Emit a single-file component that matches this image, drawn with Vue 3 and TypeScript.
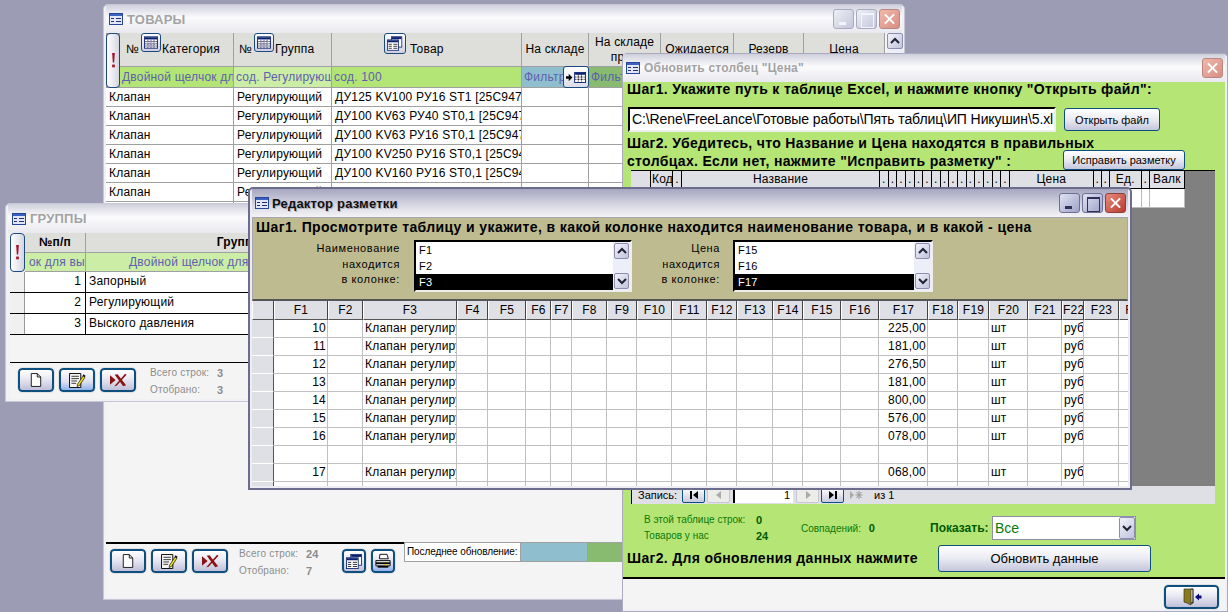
<template>
  <div class="desktop">
    <!-- shared icons -->
    <svg class="sprite" aria-hidden="true">
      <symbol id="i-form" viewBox="0 0 14 12">
        <rect x="0.5" y="0.5" width="13" height="11" fill="#dfe6f5" stroke="#27469a" />
        <rect x="1" y="1" width="12" height="2" fill="#3a62c0" />
        <path d="M2 5.5h3M7 5.5h5M2 8.5h3M7 8.5h5" stroke="#27306a" />
      </symbol>
      <symbol id="i-grid" viewBox="0 0 16 14">
        <rect x="0.5" y="0.5" width="15" height="13" fill="#fff" stroke="#0a2070" />
        <rect x="1" y="1" width="14" height="2.5" fill="#0a2070" />
        <path d="M1 6h14M1 8.5h14M1 11h14M4.5 4v9M8 4v9M11.5 4v9" stroke="#1a1a50" stroke-dasharray="1 0.6" />
      </symbol>
      <symbol id="i-forms" viewBox="0 0 20 18">
        <rect x="5.5" y="0.5" width="13" height="13" fill="#fff" stroke="#0a2070" />
        <rect x="6" y="1" width="12" height="2.5" fill="#0a2070" />
        <rect x="0.5" y="4.5" width="14" height="13" fill="#fff" stroke="#0a2070" />
        <rect x="1" y="5" width="13" height="2.5" fill="#0a2070" />
        <path d="M2 10h4M8 10h5M2 12.5h4M8 12.5h5M2 15h4M8 15h5" stroke="#111" />
      </symbol>
      <symbol id="i-new" viewBox="0 0 14 16">
        <path d="M1.5.5h7l4 4v11h-11z" fill="#fff" stroke="#000" />
        <path d="M8.5.5v4h4" fill="none" stroke="#000" />
      </symbol>
      <symbol id="i-edit" viewBox="0 0 18 16">
        <path d="M.5.5h12v15H.5z" fill="#f4f4f4" stroke="#000" />
        <path d="M2.5 3.5h8M2.5 6h8M2.5 8.5h6M2.5 11h5" stroke="#333" />
        <path d="M9 12l6-9 2 1.4-6 9-2.4 1z" fill="#f2e020" stroke="#000" stroke-width="0.7" />
        <path d="M14.4 3l1-1.6 2.2 1.4-1 1.7z" fill="#111" />
      </symbol>
      <symbol id="i-del" viewBox="0 0 18 14">
        <path d="M0 2l6 5-6 5z" fill="#8a1414" />
        <path d="M5 1.5l3-.5 9 11.5-3 1zM16 .5l1.5 1L7 13l-2.5.5z" fill="#8a1414" />
      </symbol>
      <symbol id="i-print" viewBox="0 0 18 18">
        <path d="M5.5 1.5h8l1.5 5h-10z" fill="#fff" stroke="#000" />
        <path d="M1 8.5h16v6H1z" fill="#dcdcdc" stroke="#000" />
        <path d="M1 11.5h16" stroke="#000" stroke-width="2" />
        <path d="M3 15.5h12" stroke="#000" stroke-width="2" />
        <rect x="10" y="12.5" width="4" height="1.2" fill="#e0c020" />
      </symbol>
      <symbol id="i-exit" viewBox="0 0 20 18">
        <path d="M2 1h7v16l-4-2-3-1z" fill="#8a7a18" stroke="#333" stroke-width="0.7" />
        <path d="M9 1h2v14H9" fill="none" stroke="#000" />
        <path d="M13 9l4-3.500v2h2.500v3H17v2z" fill="#0a0a80" />
      </symbol>
      <symbol id="i-goto" viewBox="0 0 22 12">
        <path d="M0 4.500h3V2l4 4-4 4V7.500H0z" fill="#000" />
        <rect x="9.500" y="0.500" width="12" height="11" fill="#fff" stroke="#0a2070" />
        <rect x="10" y="1" width="11" height="2" fill="#0a2070" />
        <path d="M10 5.500h11M10 8h11M13.500 3v8M17 3v8" stroke="#111" stroke-dasharray="1 .6" />
      </symbol>
      <symbol id="i-up" viewBox="0 0 10 8">
        <path d="M1 6l4-4 4 4" fill="none" stroke="#223" stroke-width="2" />
      </symbol>
      <symbol id="i-down" viewBox="0 0 10 8">
        <path d="M1 2l4 4 4-4" fill="none" stroke="#223" stroke-width="2" />
      </symbol>
      <symbol id="i-bang" viewBox="0 0 6 22">
        <path d="M1 0h4L4 14H2z" fill="#a0142c" />
        <rect x="1" y="17" width="4" height="4" fill="#a0142c" />
      </symbol>
    </svg>

    <!-- ТОВАРЫ -->
    <section class="win win-goods">
      <header class="title title-off">
        <svg class="form-icon"><use href="#i-form" /></svg>
        <span>ТОВАРЫ</span>
        <div class="controls">
          <i class="ctl ctl-min off"></i><i class="ctl ctl-max off"></i><i class="ctl ctl-close off"></i>
        </div>
      </header>
      <div class="goods-body">
        <div class="goods-top">
          <div class="goods-table">
            <div class="goods-head" :style="{ gridTemplateColumns: goodsTrack }">
              <button class="bang"><svg><use href="#i-bang" /></svg></button>
              <div v-for="c in goodsHeaders" :key="c.label" class="head-cell" :class="c.cls">
                <template v-if="c.no">
                  <span class="no">№</span>
                  <span class="head-icon head-icon-grid"><svg><use href="#i-grid" /></svg></span>
                </template>
                <span v-if="c.icon" class="head-icon head-icon-forms"><svg><use href="#i-forms" /></svg></span>
                <span class="head-label">{{ c.label }}</span>
              </div>
              <div v-for="f in goodsFilters" :key="f.id" class="filter-cell" :class="f.cls">{{ f.text }}</div>
              <button class="goto"><svg><use href="#i-goto" /></svg></button>
            </div>
            <div v-for="(r, i) in goodsRows" :key="i" class="goods-row" :style="{ gridTemplateColumns: goodsTrack }">
              <div class="cell wide">Клапан</div>
              <div class="cell">Регулирующий</div>
              <div class="cell">{{ r }}</div>
              <div v-for="n in 5" :key="n" class="cell"></div>
            </div>
          </div>
          <div class="goods-scroll"><span class="scroll-btn"><svg><use href="#i-up" /></svg></span></div>
        </div>
        <footer class="goods-foot">
          <div class="foot-tools">
            <button class="tool"><svg class="ic-new"><use href="#i-new" /></svg></button>
            <button class="tool"><svg class="ic-edit"><use href="#i-edit" /></svg></button>
            <button class="tool"><svg class="ic-del"><use href="#i-del" /></svg></button>
            <dl class="counts">
              <dt>Всего строк:</dt><dd>24</dd>
              <dt>Отобрано:</dt><dd>7</dd>
            </dl>
            <button class="tool tool-sq"><svg class="ic-forms"><use href="#i-forms" /></svg></button>
            <button class="tool tool-sq hot"><svg class="ic-print"><use href="#i-print" /></svg></button>
          </div>
          <div class="last-update">
            <div class="lu-label">Последнее обновление:</div>
            <div class="lu-blue"></div>
            <div class="lu-green"></div>
          </div>
        </footer>
      </div>
    </section>

    <!-- ГРУППЫ -->
    <section class="win win-groups">
      <header class="title title-off">
        <svg class="form-icon"><use href="#i-form" /></svg>
        <span>ГРУППЫ</span>
      </header>
      <div class="groups-body">
        <div class="groups-head">
          <button class="bang bang-small"><svg><use href="#i-bang" /></svg></button>
          <div class="head-cell bold">№п/п</div>
          <div class="head-cell bold h-group">Группа</div>
          <div class="filter-cell filter-light f-no">ок для выбора</div>
          <div class="filter-cell filter-light f-group">Двойной щелчок для выбора</div>
        </div>
        <div v-for="g in groups" :key="g.id" class="group-row">
          <div class="group-sel"></div>
          <div class="group-num">{{ g.id }}</div>
          <div class="group-name">{{ g.name }}</div>
        </div>
        <div class="spacer"></div>
        <footer class="groups-foot">
          <button class="tool"><svg class="ic-new"><use href="#i-new" /></svg></button>
          <button class="tool hot"><svg class="ic-edit"><use href="#i-edit" /></svg></button>
          <button class="tool"><svg class="ic-del"><use href="#i-del" /></svg></button>
          <dl class="counts">
            <dt>Всего строк:</dt><dd>3</dd>
            <dt>Отобрано:</dt><dd>3</dd>
          </dl>
        </footer>
      </div>
    </section>

    <!-- Обновить столбец "Цена" -->
    <section class="win win-update">
      <header class="title title-off title-update">
        <svg class="form-icon"><use href="#i-form" /></svg>
        <span>Обновить столбец "Цена"</span>
        <div class="controls">
          <i class="ctl ctl-close off"></i>
        </div>
      </header>
      <div class="update-green">
        <p class="step step-first">Шаг1. Укажите путь к таблице Excel, и нажмите кнопку "Открыть файл":</p>
        <div class="file-row">
          <div class="file-input">C:\Rene\FreeLance\Готовые работы\Пять таблиц\ИП Никушин\5.xl</div>
          <button class="btn btn-open">Открыть файл</button>
        </div>
        <div class="step2-row">
          <p class="step">Шаг2. Убедитесь, что Название и Цена находятся в правильных столбцах. Если нет, нажмите "Исправить разметку" :</p>
          <button class="btn btn-fix">Исправить разметку</button>
        </div>
        <div class="import-grid">
          <div class="import-head" :style="{ gridTemplateColumns: importTrack }">
            <div v-for="(c, i) in importCols" :key="i" class="import-cell">{{ c.label }}</div>
          </div>
          <div class="import-row" :style="{ gridTemplateColumns: importTrack }">
            <div v-for="(c, i) in importCols" :key="i" class="import-blank"></div>
          </div>
        </div>
        <div class="nav">
          <span class="nav-label">Запись:</span>
          <span class="nav-btn on"><svg viewBox="0 0 10 10"><path d="M1 1h2v8H1zM9 1v8L4 5z" /></svg></span>
          <span class="nav-btn dim"><svg viewBox="0 0 10 10"><path d="M7 1v8L2 5z" /></svg></span>
          <span class="nav-input">1</span>
          <span class="nav-btn dim"><svg viewBox="0 0 10 10"><path d="M3 1v8l5-4z" /></svg></span>
          <span class="nav-btn on"><svg viewBox="0 0 10 10"><path d="M1 1v8l5-4zM7 1h2v8H7z" /></svg></span>
          <span class="nav-btn nav-new"><svg viewBox="0 0 14 10"><path d="M1 1v8l4-4z" /><path d="M10 1v8M6.500 5h7M7.500 2l5 6M12.500 2l-5 6" stroke="#999" fill="none" /></svg></span>
          <span class="nav-of">из 1</span>
        </div>
        <div class="stats">
          <dl class="stats-list">
            <dt>В этой таблице строк:</dt><dd>0</dd>
            <dt>Товаров у нас</dt><dd>24</dd>
          </dl>
          <div class="stats-match">Совпадений: <b>0</b></div>
          <div class="stats-show">Показать:</div>
          <div class="combo">
            <span class="combo-text">Все</span>
            <span class="scroll-btn combo-btn"><svg><use href="#i-down" /></svg></span>
          </div>
        </div>
        <div class="step3-row">
          <p class="step">Шаг2. Для обновления данных нажмите</p>
          <button class="btn btn-refresh">Обновить данные</button>
        </div>
      </div>
      <footer class="update-foot">
        <button class="tool tool-exit"><svg class="ic-exit"><use href="#i-exit" /></svg></button>
      </footer>
    </section>

    <!-- Редактор разметки -->
    <section class="win win-editor">
      <header class="title title-on">
        <svg class="form-icon"><use href="#i-form" /></svg>
        <span>Редактор разметки</span>
        <div class="controls">
          <i class="ctl ctl-min"></i><i class="ctl ctl-max"></i><i class="ctl ctl-close"></i>
        </div>
      </header>
      <div class="editor-panel">
        <p class="editor-step">Шаг1. Просмотрите таблицу и укажите, в какой колонке находится наименование товара, и в какой - цена</p>
        <div class="pickers">
          <div v-for="p in pickers" :key="p.id" class="picker" :class="p.id">
            <div class="picker-label">
              <span v-for="l in p.label" :key="l">{{ l }}</span>
            </div>
            <div class="listbox">
              <div class="list-items">
                <div v-for="(o, i) in p.options" :key="o" class="list-item" :class="{ sel: i === 2 }">{{ o }}</div>
              </div>
              <div class="list-bar">
                <span class="scroll-btn"><svg><use href="#i-up" /></svg></span>
                <span class="scroll-btn"><svg><use href="#i-down" /></svg></span>
              </div>
            </div>
          </div>
        </div>
      </div>
      <div class="sheet">
        <div class="sheet-head" :style="{ gridTemplateColumns: sheetTrack }">
          <div class="sheet-corner"></div>
          <div v-for="c in sheetCols" :key="c.label" class="sheet-h">{{ c.label }}</div>
        </div>
        <div v-for="(r, i) in sheetRows" :key="i" class="sheet-row" :style="{ gridTemplateColumns: sheetTrack }">
          <div class="sheet-sel"></div>
          <div v-for="c in sheetCols" :key="c.label" class="sheet-c" :class="{ num: c.label === 'F1' || c.label === 'F17' }">{{ r[c.label] }}</div>
        </div>
      </div>
    </section>
  </div>
</template>

<script setup lang="ts">
import { computed } from 'vue'

const goodsWidths = [14, 114, 98, 190, 67, 72, 73, 70, 81]
const goodsTrack = computed(() => goodsWidths.map((w) => `${w}px`).join(' '))

const goodsHeaders = [
  { label: 'Категория', no: true, cls: 'h-cat' },
  { label: 'Группа', no: true, cls: 'h-grp' },
  { label: 'Товар', icon: true, cls: 'h-item' },
  { label: 'На складе', cls: '' },
  { label: 'На складе прои', cls: 'h-wrap' },
  { label: 'Ожидается', cls: '' },
  { label: 'Резерв', cls: '' },
  { label: 'Цена', cls: '' }
]

const goodsFilters = [
  { id: 1, text: 'Двойной щелчок для', cls: '' },
  { id: 2, text: 'сод. Регулирующий', cls: 'filter-light' },
  { id: 3, text: 'сод. 100', cls: '' },
  { id: 4, text: 'Фильтр', cls: 'filter-blue' },
  { id: 5, text: 'Фильтр', cls: 'filter-dark' },
  { id: 6, text: '', cls: '' },
  { id: 7, text: '', cls: '' },
  { id: 8, text: '', cls: '' }
]

const goodsRows = [
  'ДУ125 KV100 РУ16 ST1 [25С947',
  'ДУ100 KV63 РУ40 ST0,1 [25С947',
  'ДУ100 KV63 РУ16 ST0,1 [25С947',
  'ДУ100 KV250 РУ16 ST0,1 [25С94',
  'ДУ100 KV160 РУ16 ST0,1 [25С94',
  'ДУ100 KV160 РУ40 ST0,1 [25С94',
  'ДУ80 KV100 РУ16 ST0,1 [25С947'
]

const groups = [
  { id: 1, name: 'Запорный' },
  { id: 2, name: 'Регулирующий' },
  { id: 3, name: 'Выского давления' }
]

const importCols = computed(() => {
  const dots = (n: number, w: number) => Array.from({ length: n }, () => ({ label: '.', w }))
  return [
    { label: '', w: 20 },
    { label: 'Код', w: 22 },
    { label: '.', w: 9 },
    { label: 'Название', w: 198 },
    ...dots(15, 8.67),
    { label: 'Цена', w: 84 },
    { label: '.', w: 8 },
    { label: '.', w: 8 },
    { label: 'Ед.', w: 32 },
    { label: '.', w: 8 },
    { label: 'Валк', w: 35 }
  ]
})
const importTrack = computed(() => importCols.value.map((c) => `${c.w}px`).join(' '))

const pickers = [
  { id: 'p-name', label: ['Наименование', 'находится', 'в колонке:'], options: ['F1', 'F2', 'F3'] },
  { id: 'p-price', label: ['Цена', 'находится', 'в колонке:'], options: ['F15', 'F16', 'F17'] }
]

const sheetCols = [
  ['F1', 54], ['F2', 35], ['F3', 94], ['F4', 31], ['F5', 38], ['F6', 25], ['F7', 21], ['F8', 35],
  ['F9', 30], ['F10', 35], ['F11', 35], ['F12', 30], ['F13', 36], ['F14', 30], ['F15', 38], ['F16', 38],
  ['F17', 49], ['F18', 30], ['F19', 31], ['F20', 39], ['F21', 34], ['F22', 22], ['F23', 35], ['F', 20]
].map(([label, w]) => ({ label: label as string, w: w as number }))

const sheetTrack = computed(() => ['22px', ...sheetCols.map((c) => `${c.w}px`)].join(' '))

const priced = (num: string, price: string): Record<string, string> => ({
  F1: num,
  F3: 'Клапан регулируемый',
  F17: price,
  F20: 'шт',
  F22: 'руб'
})

const sheetRows: Record<string, string>[] = [
  priced('10', '225,00'),
  priced('11', '181,00'),
  priced('12', '276,50'),
  priced('13', '181,00'),
  priced('14', '800,00'),
  priced('15', '576,00'),
  priced('16', '078,00'),
  {},
  priced('17', '068,00'),
  {}
]
</script>

<style>
html,
body {
  margin: 0;
  background: #9d9cb5;
}
</style>

<style scoped>
* {
  box-sizing: border-box;
}

.desktop {
  position: relative;
  width: 1228px;
  height: 612px;
  overflow: hidden;
  background: #9d9cb5;
  font-family: 'Liberation Sans', Arial, sans-serif;
  font-size: 12px;
  letter-spacing: 0.2px;
  color: #000;
}

.sprite {
  display: none;
}

svg {
  display: block;
}

button {
  font: inherit;
  letter-spacing: inherit;
  padding: 0;
}

/* windows */
.win {
  position: absolute;
  display: flex;
  flex-direction: column;
  padding: 0 2px 2px;
  border: 1px solid #c7c7d6;
  border-radius: 5px 5px 0 0;
  background: #f0f0f5;
}

.win-goods {
  left: 103px;
  top: 4px;
  width: 802px;
  height: 596px;
}

.win-groups {
  left: 5px;
  top: 203px;
  width: 405px;
  height: 199px;
}

.win-update {
  left: 622px;
  top: 53px;
  width: 606px;
  height: 559px;
  padding-left: 0;
  border-color: #a9a9c0;
}

.win-editor {
  left: 248px;
  top: 187px;
  width: 884px;
  height: 303px;
  border: 2px solid #6c6c8c;
  padding: 0 2px 2px;
  background: #ececf2;
}

.title {
  flex: none;
  display: flex;
  align-items: center;
  gap: 4px;
  height: 28px;
  padding-left: 3px;
  font-size: 13px;
  font-weight: bold;
}

.title-off {
  color: #a3a3a3;
  background: linear-gradient(#d0d0dc, #fbfbfd 45%, #e8e8ee);
}

.title-on {
  height: 28px;
  gap: 3px;
  color: #111;
  background: linear-gradient(#a6a6c0, #d5d5e2 55%, #f4f4f6);
  text-shadow: 1px 1px 0 #b0b0b8;
}

.title-update {
  height: 28px;
  font-size: 12px;
}

.win-groups .title {
  height: 29px;
  padding-left: 4px;
}

.form-icon {
  width: 14px;
  height: 12px;
}

.controls {
  display: flex;
  gap: 2px;
  margin-left: auto;
  margin-right: 2px;
}

.ctl {
  position: relative;
  display: block;
  width: 21px;
  height: 20px;
  border: 1px solid #6e6e96;
  border-radius: 3px;
  background: linear-gradient(135deg, #e0e2f2, #9ea3c8);
}

.ctl.off {
  border-color: #a8a8c0;
  background: linear-gradient(135deg, #eef0f6, #c2c5da);
}

.ctl-min::after {
  content: '';
  position: absolute;
  left: 5px;
  bottom: 3px;
  width: 7px;
  height: 3px;
  background: #30305a;
}

.ctl-max::after {
  content: '';
  position: absolute;
  left: 4px;
  top: 3px;
  width: 11px;
  height: 12px;
  border: 1px solid #30305a;
  border-top-width: 2px;
}

.ctl.off::after {
  border-color: #f4f4fa;
  background-color: transparent;
}

.ctl-min.off::after {
  background: #f4f4fa;
}

.ctl-close {
  border-color: #8c4038;
  background: linear-gradient(135deg, #e88a7c, #b83c30);
}

.ctl-close.off {
  border-color: #b88880;
  background: linear-gradient(135deg, #f0b8ac, #d88e82);
}

.ctl-close::before,
.ctl-close::after {
  content: '';
  position: absolute;
  left: 3px;
  top: 8px;
  width: 13px;
  height: 2px;
  border: 0;
  background: #fff;
  transform: rotate(45deg);
}

.ctl-close::after,
.ctl-close.off::after {
  background: #fff;
  transform: rotate(-45deg);
}

/* goods window */
.goods-body {
  flex: 1;
  display: flex;
  flex-direction: column;
  background: #f4f4f4;
  min-height: 0;
}

.goods-top {
  flex: 1;
  display: flex;
  min-height: 0;
}

.goods-table {
  width: 779px;
}

.goods-head {
  position: relative;
  display: grid;
  grid-template-rows: 34px 21px;
  background: #a0a0a0;
}

.goods-head .bang {
  grid-row: 1 / span 2;
}

.bang {
  display: flex;
  align-items: center;
  justify-content: center;
  border: 1px solid #1a4a80;
  border-radius: 4px;
  background: linear-gradient(90deg, #fff, #d5d5e2);
}

.bang svg {
  width: 5px;
  height: 15px;
}

.head-cell {
  position: relative;
  display: flex;
  align-items: center;
  justify-content: center;
  border-right: 1px solid #a0a0a0;
  border-bottom: 1px solid #a0a0a0;
  background: #dededa;
  text-align: center;
  line-height: 15px;
  white-space: nowrap;
  overflow: hidden;
}

.h-cat,
.h-grp {
  justify-content: flex-start;
  padding-left: 6px;
  gap: 23px;
  overflow: visible;
}

.h-grp {
  padding-left: 5px;
}

.h-item {
  justify-content: flex-start;
  overflow: visible;
  padding-left: 78px;
}

.h-wrap {
  white-space: normal;
  padding: 0 2px;
}

.head-icon {
  display: block;
  border: 1px solid #1a4a80;
  border-radius: 3px;
  background: linear-gradient(#fff, #cfcfe0);
  padding: 2px;
}

.head-icon-grid {
  position: absolute;
  left: 21px;
  top: 0;
  width: 20px;
  height: 19px;
}

.h-grp .head-icon-grid {
  left: 20px;
}

.head-icon-grid svg {
  width: 14px;
  height: 13px;
}

.head-icon-forms {
  position: absolute;
  left: 52px;
  top: 0;
  width: 22px;
  height: 21px;
}

.head-icon-forms svg {
  width: 16px;
  height: 15px;
}

.head-label {
  display: block;
}

.filter-cell {
  display: flex;
  align-items: center;
  padding-left: 2px;
  border-right: 1px solid #a0a0a0;
  border-bottom: 1px solid #a0a0a0;
  background: #b2e576;
  color: #5f5fae;
  white-space: nowrap;
  overflow: hidden;
}

.filter-light {
  background: #cbeda6;
}

.filter-blue {
  background: #8fbfcf;
}

.filter-dark {
  background: #88bb70;
}

.goto {
  position: absolute;
  left: 457px;
  top: 33px;
  width: 26px;
  height: 22px;
  display: flex;
  align-items: center;
  justify-content: center;
  border: 1px solid #1a4a80;
  border-radius: 3px;
  background: linear-gradient(#fff, #dcdce8);
}

.goto svg {
  width: 20px;
  height: 11px;
}

.goods-row {
  display: grid;
  height: 19px;
  background: #fff;
}

.cell {
  display: flex;
  align-items: center;
  padding-left: 3px;
  border-right: 1px solid #a0a0a0;
  border-bottom: 1px solid #a0a0a0;
  white-space: nowrap;
  overflow: hidden;
}

.cell.wide {
  grid-column: span 2;
}

.goods-scroll {
  margin-left: 2px;
  width: 17px;
  background: #eceef8;
}

.scroll-btn {
  display: flex;
  align-items: center;
  justify-content: center;
  width: 16px;
  height: 16px;
  border: 1px solid #8d8db0;
  border-radius: 2px;
  background: linear-gradient(135deg, #f2f2fa, #c0c4dc);
}

.scroll-btn svg {
  width: 10px;
  height: 8px;
}

.goods-foot {
  flex: none;
  display: flex;
  height: 55px;
  margin-bottom: 0;
}

.foot-tools {
  display: flex;
  align-items: flex-start;
  width: 298px;
  padding: 5px 0 0 4px;
  border-top: 2px solid #000;
  gap: 5px;
}

.tool {
  display: flex;
  align-items: center;
  justify-content: center;
  width: 36px;
  height: 24px;
  border: 2px solid #0e4f80;
  border-radius: 4px;
  outline: 1px solid #e2e2e2;
  background: linear-gradient(#fff, #e8e8f2 45%, #bfc0d8);
}

.tool.hot {
  background: linear-gradient(#fff, #dedef0 60%, #8fb2ec);
}

.tool-sq {
  width: 24px;
}

.ic-new {
  width: 12px;
  height: 14px;
}

.ic-edit {
  width: 17px;
  height: 15px;
}

.ic-del {
  width: 17px;
  height: 14px;
}

.ic-forms {
  width: 17px;
  height: 15px;
}

.ic-print {
  width: 16px;
  height: 16px;
}

.ic-exit {
  width: 20px;
  height: 18px;
}

.counts {
  display: grid;
  grid-template-columns: 67px auto;
  grid-auto-rows: 17px;
  align-items: center;
  margin: -4px 0 0 6px;
  width: 98px;
  font-size: 10px;
  letter-spacing: 0.2px;
  color: #8c8c8c;
}

.groups-foot .counts {
  margin-left: 9px;
}

.counts dt,
.counts dd {
  margin: 0;
}

.counts dd {
  font-size: 11px;
  font-weight: bold;
}

.last-update {
  display: flex;
  height: 20px;
  border-top: 1px solid #a0a0a0;
}

.lu-label {
  width: 117px;
  padding-left: 2px;
  border: 1px solid #a0a0a0;
  border-width: 0 1px 1px 1px;
  background: #fff;
  line-height: 18px;
  font-size: 10px;
  letter-spacing: -0.1px;
  white-space: nowrap;
}

.lu-blue {
  width: 67px;
  background: #8fbfcf;
  border-right: 1px solid #a0a0a0;
  border-bottom: 1px solid #a0a0a0;
}

.lu-green {
  width: 60px;
  background: #88bb70;
}

/* groups window */
.groups-body {
  flex: 1;
  display: flex;
  flex-direction: column;
  margin: 0 0 0 2px;
  background: #f4f4f4;
  min-height: 0;
}

.groups-head {
  display: grid;
  grid-template-columns: 15px 61px 1fr;
  grid-template-rows: 20px 19px;
}

.groups-head .bang {
  grid-row: 1 / span 2;
}

.bold {
  font-weight: bold;
}

.h-group {
  padding-right: 16px;
}

.f-no {
  padding-left: 4px;
}

.f-group {
  padding-left: 43px;
}

.group-row {
  display: grid;
  grid-template-columns: 15px 61px 1fr;
  height: 21px;
  background: #fff;
  border-bottom: 1px solid #000;
}

.group-sel {
  background: #f0f0f0;
  border-right: 1px solid #999;
}

.group-num {
  padding-right: 4px;
  text-align: right;
  border-right: 1px solid #000;
  line-height: 19px;
}

.group-name {
  padding-left: 3px;
  line-height: 19px;
}

.spacer {
  flex: 1;
}

.groups-foot {
  display: flex;
  align-items: flex-start;
  gap: 5px;
  height: 37px;
  padding: 5px 0 0 8px;
  border-top: 1px solid #000;
}

/* update window */
.update-green {
  display: flex;
  flex-direction: column;
  height: 498px;
  padding-top: 0;
  background: #b5e575;
  border-bottom: 2px solid #000;
}

.step {
  margin: 0;
  font-size: 14px;
  font-weight: bold;
  letter-spacing: 0.33px;
  line-height: 18px;
}

.step-first {
  padding: 0 0 0 4px;
  line-height: 14px;
}

.file-row {
  display: flex;
  align-items: center;
  gap: 8px;
  margin: 11px 0 0 5px;
}

.file-input {
  width: 428px;
  height: 25px;
  padding-left: 2px;
  border: 2px solid #000;
  border-right-color: #eee;
  border-bottom-color: #eee;
  background: #fff;
  font-size: 14px;
  letter-spacing: -0.1px;
  line-height: 21px;
  white-space: nowrap;
  overflow: hidden;
}

.btn {
  border: 1px solid #0e4f80;
  border-radius: 3px;
  background: linear-gradient(#fff, #eaeaf2 50%, #c4c6dc);
  font-size: 11px;
  letter-spacing: 0;
  white-space: nowrap;
}

.btn-open {
  width: 96px;
  height: 23px;
}

.step2-row {
  display: flex;
  align-items: flex-end;
  height: 37px;
  margin-top: 1px;
  padding-left: 4px;
}

.step2-row .step {
  width: 482px;
}

.btn-fix {
  width: 122px;
  height: 20px;
  margin-left: -46px;
  margin-bottom: 0;
  overflow: hidden;
}

.import-grid {
  height: 316px;
  margin: 0 10px 0 8px;
  background: #808080;
  border-top: 1px solid #000;
}

.import-head {
  display: grid;
  height: 18px;
  width: max-content;
}

.import-cell {
  padding: 0 1px;
  background: #dfdfe6;
  border-right: 1px solid #000;
  border-bottom: 1px solid #000;
  text-align: center;
  line-height: 17px;
  white-space: nowrap;
  overflow: hidden;
}

.import-row {
  display: grid;
  height: 19px;
  width: max-content;
}

.import-blank {
  background: #fff;
  border-right: 1px solid #bbb;
  border-bottom: 1px solid #bbb;
}

.nav {
  display: flex;
  align-items: center;
  gap: 2px;
  height: 18px;
  margin: 0 10px 0 8px;
  padding-left: 6px;
  background: #dfdfe6;
  font-size: 11px;
  letter-spacing: 0;
  border-left: 1px solid #000;
}

.nav-label {
  width: 42px;
}

.nav-btn {
  display: flex;
  align-items: center;
  justify-content: center;
  width: 23px;
  height: 16px;
  border: 1px solid #c8c8d0;
  border-radius: 2px;
  background: #ecece8;
}

.nav-btn svg {
  width: 10px;
  height: 10px;
  fill: #aaa;
}

.nav-btn.on {
  border-color: #0e4f80;
  background: linear-gradient(#fff, #c8cade);
}

.nav-btn.on svg {
  fill: #000;
}

.nav-new {
  width: 20px;
  border: 0;
  background: none;
}

.nav-new svg {
  width: 14px;
}

.nav-input {
  width: 60px;
  height: 16px;
  margin: 0 1px;
  padding-right: 3px;
  background: #fff;
  border-left: 2px solid #000;
  text-align: right;
  line-height: 16px;
}

.nav-of {
  margin-left: 6px;
}

.stats {
  display: flex;
  align-items: center;
  height: 39px;
  padding-top: 8px;
  color: #0a7a0a;
  font-size: 10px;
  letter-spacing: 0;
}

.stats-list {
  display: grid;
  grid-template-columns: 112px 30px;
  grid-auto-rows: 16px;
  align-items: center;
  margin: 0 0 0 21px;
}

.stats-list dt,
.stats-list dd {
  margin: 0;
}

.stats-list dd {
  color: #005a00;
  font-size: 11px;
  font-weight: bold;
}

.stats-match {
  width: 129px;
  margin-left: 15px;
}

.stats-match b {
  margin-left: 5px;
  color: #005a00;
  font-size: 11px;
}

.stats-show {
  width: 62px;
  color: #005a00;
  font-size: 12px;
  font-weight: bold;
}

.combo {
  display: flex;
  align-items: center;
  justify-content: space-between;
  width: 144px;
  height: 24px;
  border: 1px solid #8d8db0;
  background: #fff;
}

.combo-text {
  padding-left: 2px;
  color: #0a7a0a;
  font-size: 14px;
}

.combo-btn {
  width: 16px;
  height: 22px;
}

.step3-row {
  display: flex;
  align-items: center;
  gap: 15px;
  padding-left: 4px;
  height: 30px;
}

.step3-row .step {
  width: 296px;
  white-space: nowrap;
}

.btn-refresh {
  width: 213px;
  height: 27px;
  font-size: 13px;
}

.update-foot {
  flex: 1;
  display: flex;
  justify-content: flex-end;
  align-items: flex-start;
  padding: 6px 6px 0 0;
  background: #f4f4f4;
}

.tool-exit {
  width: 55px;
}

/* editor window */
.editor-panel {
  flex: none;
  height: 84px;
  padding: 2px 0 0 3px;
  background: #bfbb90;
  border: 1px solid #a6a6b0;
  border-bottom: 2px solid #555;
}

.editor-step {
  margin: 0;
  font-size: 14px;
  font-weight: bold;
  letter-spacing: 0.4px;
  line-height: 14px;
  white-space: nowrap;
}

.pickers {
  display: flex;
  margin-top: 6px;
}

.picker {
  display: flex;
  gap: 14px;
}

.p-name {
  width: 467px;
}

.p-price {
  gap: 13px;
}

.picker-label {
  display: flex;
  flex-direction: column;
  align-items: flex-end;
  width: 144px;
  padding-top: 1px;
  font-size: 11px;
  letter-spacing: 0.6px;
  line-height: 15.500px;
}

.p-price .picker-label {
  width: 0;
  min-width: 0;
  margin-left: -3px;
  white-space: nowrap;
}

.p-name .picker-label {
  width: 144px;
}

.listbox {
  display: flex;
  width: 218px;
  height: 52px;
  border: 2px solid #000;
  border-right-color: #eee;
  border-bottom-color: #eee;
  background: #fff;
}

.p-price .listbox {
  width: 200px;
}

.list-items {
  flex: 1;
  font-size: 11px;
}

.list-item {
  height: 16px;
  padding-left: 3px;
  line-height: 16px;
}

.list-item.sel {
  background: #000;
  color: #fff;
}

.list-bar {
  display: flex;
  flex-direction: column;
  justify-content: space-between;
  padding: 1px;
  width: 17px;
  background: #eceef8;
}

.list-bar .scroll-btn {
  width: 15px;
}

.sheet {
  flex: 1;
  background: #fff;
  overflow: hidden;
}

.sheet-head {
  display: grid;
  height: 19px;
  width: max-content;
}

.sheet-corner,
.sheet-h {
  background: #dfdfe6;
  border-right: 1px solid #444;
  border-bottom: 1px solid #555;
  border-left: 1px solid #fff;
  text-align: center;
  line-height: 18px;
  white-space: nowrap;
  overflow: hidden;
}

.sheet-row {
  display: grid;
  height: 18px;
  width: max-content;
}

.sheet-sel {
  background: #dfdfe6;
  border-bottom: 1px solid #fff;
  border-right: 1px solid #555;
}

.sheet-c {
  padding: 0 1px 0 2px;
  border-right: 1px solid #c0c0c0;
  border-bottom: 1px solid #c0c0c0;
  line-height: 17px;
  white-space: nowrap;
  overflow: hidden;
}

.sheet-c.num {
  text-align: right;
}
</style>
